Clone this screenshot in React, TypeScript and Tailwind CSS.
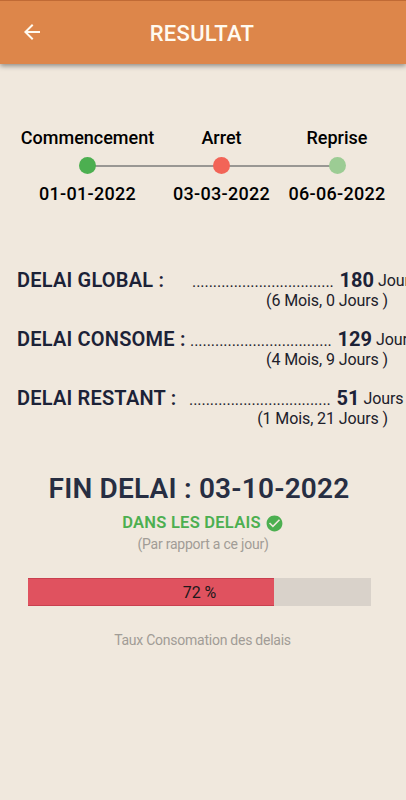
import { MdArrowBack, MdCheckCircle } from 'react-icons/md';

interface Step {
  label: string;
  date: string;
  width: string;
  dot: string;
}

interface Delay {
  label: string;
  labelWidth: string;
  value: number;
  detail: string;
}

const STEPS: Step[] = [
  { label: 'Commencement', date: '01-01-2022', width: 'w-[134px]', dot: 'bg-[#4caf50]' },
  { label: 'Arret', date: '03-03-2022', width: 'w-[97px]', dot: 'bg-[#f26457]' },
  { label: 'Reprise', date: '06-06-2022', width: 'w-[97px]', dot: 'bg-[#9ccc94]' },
];

const TOTAL_DAYS = 180;
const USED_DAYS = 129;

const DELAYS: Delay[] = [
  { label: 'DELAI GLOBAL :', labelWidth: 'w-[175px]', value: TOTAL_DAYS, detail: '(6 Mois, 0 Jours )' },
  { label: 'DELAI CONSOME :', labelWidth: 'w-[173px]', value: USED_DAYS, detail: '(4 Mois, 9 Jours )' },
  { label: 'DELAI RESTANT :', labelWidth: 'w-[172px]', value: TOTAL_DAYS - USED_DAYS, detail: '(1 Mois, 21 Jours )' },
];

function Header() {
  return (
    <header className="relative flex h-16 items-center justify-center border-t border-[#c06a35] bg-[#dd864a] pt-0.5 text-[#fffaf0] shadow-[0_2px_5px_rgba(0,0,0,0.4)]">
      <MdArrowBack className="absolute left-5 top-[19px] size-6" />
      <h1 className="pr-[2px] text-[22px] font-medium leading-none tracking-[0.3px]">RESULTAT</h1>
    </header>
  );
}

function Timeline() {
  return (
    <section className="relative mt-[62px] flex justify-center gap-[18.5px] text-lg font-medium text-black">
      <div className="absolute left-[88px] right-[69px] top-[39px] h-[2px] bg-[#999793]" />
      {STEPS.map((step) => (
        <div key={step.label} className={`${step.width} relative flex flex-col items-center whitespace-nowrap`}>
          <span className="leading-6">{step.label}</span>
          <span className={`${step.dot} mt-[7px] size-[17px] rounded-full`} />
          <span className="mt-2 leading-6 tracking-[0.3px]">{step.date}</span>
        </div>
      ))}
    </section>
  );
}

function DelayRow({ delay }: { delay: Delay }) {
  return (
    <div className="h-[59px] pl-[17px]">
      <div className="flex items-baseline whitespace-nowrap leading-6">
        <span className={`${delay.labelWidth} shrink-0 text-xl font-semibold tracking-[0.2px] text-[#1c2237]`}>
          {delay.label}
        </span>
        <span className="w-[147.5px] shrink-0 text-base tracking-[-0.05px]">..................................</span>
        <span className="shrink-0 text-xl font-bold text-[#1c2237]">{delay.value}</span>
        <span className="ml-1 shrink-0 -translate-y-px text-base tracking-[-0.1px]">Jours</span>
      </div>
      <p className="pr-[18px] text-right text-base leading-[13px] tracking-[-0.1px]">{delay.detail}</p>
    </div>
  );
}

export default function App() {
  const ratio = (USED_DAYS / TOTAL_DAYS) * 100;

  return (
    <div className="h-[800px] w-[406px] overflow-hidden bg-[#f0e8dd] font-['Roboto',sans-serif] text-[#20202a]">
      <Header />
      <Timeline />

      <section className="mt-[60px]">
        {DELAYS.map((delay) => (
          <DelayRow key={delay.label} delay={delay} />
        ))}
      </section>

      <section className="mt-[30px] flex flex-col items-center">
        <h2 className="whitespace-nowrap pr-2 text-[28px] font-semibold leading-8 tracking-[0.2px] text-[#272e42]">
          FIN DELAI : 03-10-2022
        </h2>
        <div className="mt-2 flex items-center gap-1 text-[16.5px] font-semibold leading-5 text-[#4caf50]">
          <span className="tracking-[0.25px]">DANS LES DELAIS</span>
          <MdCheckCircle className="size-[19px]" />
        </div>
        <p className="mt-px text-sm leading-5 tracking-[-0.22px] text-[#a19c96]">(Par rapport a ce jour)</p>
      </section>

      {/* Progress */}
      <section className="ml-7 mt-6 w-[343px]">
        <div className="relative flex h-7 items-center justify-center bg-[#d9d2ca]">
          <div
            className="absolute inset-y-0 left-0 border-y border-[#c9404f] bg-[#e0525f]"
            style={{ width: `${ratio}%` }}
          />
          <span className="relative pt-0.5 text-base text-[#20191b]">{Math.round(ratio)} %</span>
        </div>
      </section>
      <p className="mt-6 pr-px text-center text-sm leading-5 tracking-[-0.25px] text-[#a19c96]">
        Taux Consomation des delais
      </p>
    </div>
  );
}
